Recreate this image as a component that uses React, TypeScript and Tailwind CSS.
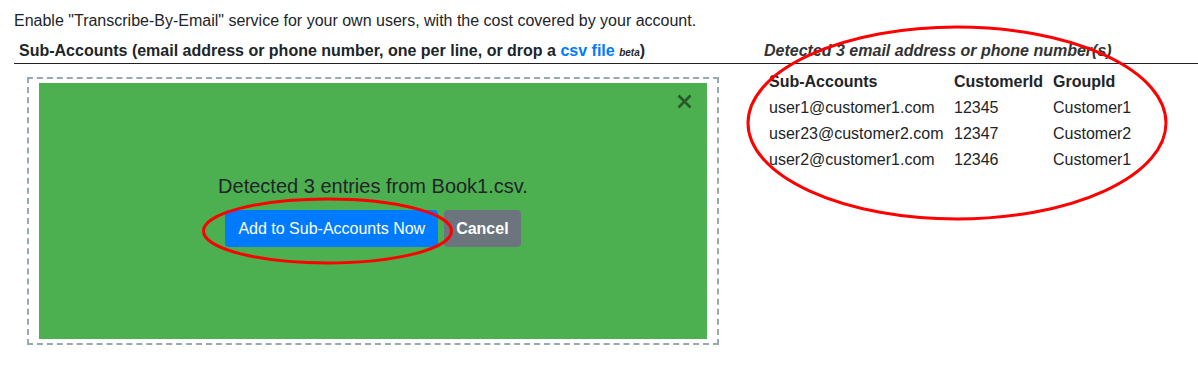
import React from 'react';

const rows = [
  { account: 'user1@customer1.com', customerId: '12345', groupId: 'Customer1' },
  { account: 'user23@customer2.com', customerId: '12347', groupId: 'Customer2' },
  { account: 'user2@customer1.com', customerId: '12346', groupId: 'Customer1' },
];

const App: React.FC = () => (
  <div className="relative w-[1198px] h-[388px] overflow-hidden bg-white font-['Liberation_Sans',Arial,sans-serif] text-[16px] text-[#212529]">
    <p className="pl-[14px] pt-[9px] leading-[24px]">
      Enable "Transcribe-By-Email" service for your own users, with the cost covered by your account.
    </p>

    <div className="ml-[14px] mt-[5px] flex h-[26px] items-center border-b border-[#222]">
      <div className="w-[750px] pl-[5px] font-bold">
        Sub-Accounts (email address or phone number, one per line, or drop a{' '}
        <span className="text-[#007bff]">csv file</span>{' '}
        <i className="text-[10px]">beta</i>)
      </div>
      <div className="font-bold italic text-[#333]">Detected 3 email address or phone number(s)</div>
    </div>

    <div className="ml-[14px] flex">
      <div className="w-[750px] pl-[13px] pt-[13px]">
        <div className="w-[692px] h-[268px] border-2 border-dashed border-[#97aab0] px-[10px] py-[4px]">
          <div className="relative flex h-full flex-col items-center justify-center bg-[#4caf50]">
            <svg className="absolute right-[15px] top-[11px]" width="15" height="15" viewBox="0 0 15 15">
              <path d="M1.5 1.5 L13.5 13.5 M13.5 1.5 L1.5 13.5" stroke="#27592b" strokeWidth="2.6" />
            </svg>
            <p className="text-[20px] leading-[30px] mt-[-4px]">Detected 3 entries from Book1.csv.</p>
            <div className="mt-[9px] flex gap-[6px]">
              <button className="h-[37px] rounded-[4px] bg-[#007bff] px-[13px] text-white leading-[24px]">
                Add to Sub-Accounts Now
              </button>
              <button className="h-[37px] rounded-[4px] bg-[#6c757d] px-[12px] font-bold text-white leading-[24px]">
                Cancel
              </button>
            </div>
          </div>
        </div>
      </div>

      <div className="pl-[5px] pt-[5px]">
        <div className="grid grid-cols-[185px_99px_auto] leading-[26px]">
          <div className="font-bold">Sub-Accounts</div>
          <div className="font-bold">CustomerId</div>
          <div className="font-bold">GroupId</div>
          {rows.map((r) => (
            <React.Fragment key={r.account}>
              <div>{r.account}</div>
              <div>{r.customerId}</div>
              <div>{r.groupId}</div>
            </React.Fragment>
          ))}
        </div>
      </div>
    </div>

    <svg className="pointer-events-none absolute left-0 top-0" width="1198" height="388">
      <ellipse cx="957" cy="123" rx="209" ry="96" fill="none" stroke="#f00" strokeWidth="3" />
      <ellipse cx="327.5" cy="231" rx="124" ry="32" fill="none" stroke="#f00" strokeWidth="3" />
    </svg>
  </div>
);

export default App;
